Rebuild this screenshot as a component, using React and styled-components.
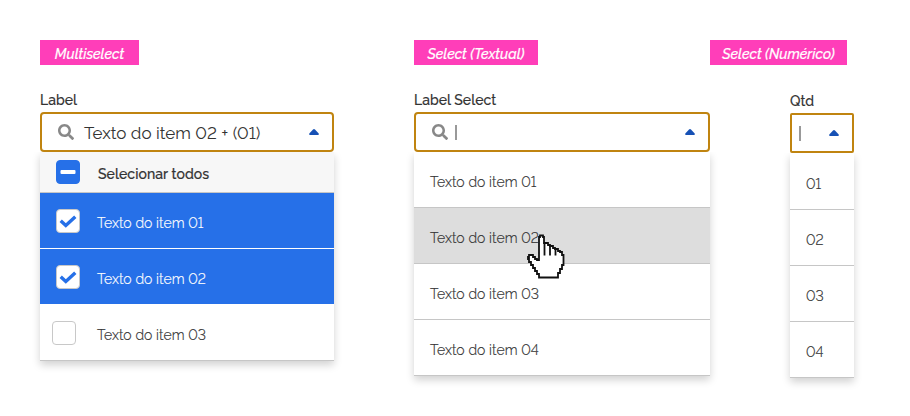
import React from 'react';
import styled, { createGlobalStyle } from 'styled-components';
import { FaSearch } from 'react-icons/fa';

const GlobalStyle = createGlobalStyle`
  * { box-sizing: border-box; }
  body { margin: 0; background: #fff; }
`;

const Page = styled.main`
  display: flex;
  width: 910px;
  height: 416px;
  padding: 40px 0 0 40px;
  font-family: Raleway, Lato, sans-serif;
  font-variant-numeric: lining-nums;
  color: #333;
`;

const Column = styled.section`
  width: ${p => p.$width}px;
  margin-right: ${p => p.$gap || 0}px;
  flex: none;
`;

const Tag = styled.div`
  width: ${p => p.$width}px;
  height: 25px;
  padding-top: 2px;
  line-height: 24px;
  background: #ff3eb9;
  color: #fff;
  text-align: center;
  font-size: 14px;
  font-style: italic;
  font-weight: 500;
  -webkit-text-stroke: 0.2px #fff;
  white-space: nowrap;
`;

const Control = styled.div`
  width: ${p => p.$width}px;
  margin: ${p => p.$top || 0}px 0 0 ${p => p.$left || 0}px;
`;

const Label = styled.div`
  height: 22px;
  margin-top: 25px;
  line-height: 21px;
  font-size: 14px;
  font-weight: 500;
  letter-spacing: 0.04px;
  -webkit-text-stroke: 0.15px #333;
`;

const Field = styled.div`
  display: flex;
  align-items: center;
  height: 40px;
  padding: 0 ${p => p.$right || 13}px 0 ${p => p.$left || 16}px;
  border: 2px solid #c08410;
  border-radius: ${p => p.$radius || 4}px;
  background: #fff;
`;

const SearchIcon = styled(FaSearch)`
  width: 16px;
  height: 16px;
  color: #888;
  flex: none;
`;

const Value = styled.span`
  margin: 2px 0 0 10px;
  font-size: 17px;
  line-height: 24px;
  letter-spacing: 0.03px;
  white-space: nowrap;
`;

const Caret = styled.span`
  width: 2px;
  height: 15px;
  margin-left: ${p => p.$left || 0}px;
  background: #999;
`;

const ArrowSvg = styled.svg`
  width: 10px;
  height: 6px;
  margin-left: auto;
  fill: #1651b5;
`;

const List = styled.div`
  box-shadow: 0 4px 8px rgba(0, 0, 0, 0.18);
  clip-path: inset(0 -16px -16px -16px);
`;

const Row = styled.div`
  display: flex;
  align-items: center;
  height: ${p => p.$height || 56}px;
  padding: ${p => p.$top ?? 5}px 0 0 ${p => p.$left || 16}px;
  border-bottom: ${p => (p.$last ? 0 : 1)}px solid ${p => p.$line || '#c6c6c6'};
  background: ${p => p.$bg || '#fff'};
  color: ${p => p.$color || '#333'};
`;

const ItemText = styled.span`
  font-size: 14px;
  line-height: 20px;
  font-weight: ${p => p.$weight || 300};
  letter-spacing: 0.07px;
  -webkit-text-stroke: 0.2px currentColor;
  margin-left: ${p => p.$left || 0}px;
  white-space: nowrap;
`;

const Box = styled.span`
  display: flex;
  align-items: center;
  justify-content: center;
  width: 24px;
  height: 24px;
  margin-top: ${p => p.$shift ?? -4}px;
  border: 1px solid ${p => (p.$filled ? '#2670e8' : '#c8c8c8')};
  border-radius: 4px;
  background: ${p => (p.$filled ? '#2670e8' : '#fff')};
  flex: none;
`;

const HoverRow = styled(Row)`
  position: relative;
`;

const Pointer = styled.svg`
  position: absolute;
  left: 110px;
  top: 24px;
  width: 44px;
  height: 50px;
  z-index: 1;
`;

const Arrow = () => (
  <ArrowSvg viewBox="0 0 10 6"><path d="M5 0Q5.5 0 6 .5L9.7 4.6Q10.2 6 9 6H1Q-.2 6 .3 4.6L4 .5Q4.5 0 5 0Z" /></ArrowSvg>
);

const Check = () => (
  <svg width="18" height="14" viewBox="0 0 18 14">
    <path d="M1.7 6.8L6.8 11.5L16.3 2.7" fill="none" stroke="#2670e8" strokeWidth="3.4" />
  </svg>
);

const Minus = () => (
  <svg width="16" height="4" viewBox="0 0 16 4"><rect x=".5" width="15" height="4" rx="1" fill="#fff" /></svg>
);

const HandPointer = () => (
  <Pointer viewBox="0 0 44 50">
    <path
      d="M15 28V5H16V3.5H19V5H20V11H24V13H26V14H29V16H31V17H34V19H36V20H38V23H39.5V33H38V37H36V41H34V45.5H15V42H13V39H11V36H9V33H7V30H5V27H4V25H5V23H9V25H11V27H13V28H15Z"
      fill="#fff" stroke="#111" strokeWidth="1.8"
    />
    <path d="M20.5 10V23.5M26 13V23.5M31.5 16V23.5" stroke="#111" strokeWidth="1.8" />
  </Pointer>
);

export default function App() {
  return (
    <>
      <GlobalStyle />
      <Page>
        <Column $width={294} $gap={80}>
          <Tag $width={99}>Multiselect</Tag>
          <Control $width={294}>
            <Label>Label</Label>
            <Field>
              <SearchIcon />
              <Value>Texto do item 02 + (01)</Value>
              <Arrow />
            </Field>
            <List>
              <Row $height={41} $top={3} $bg="#f7f7f7">
                <Box $filled $shift={-3}><Minus /></Box>
                <ItemText $left={18} $weight={500}>Selecionar todos</ItemText>
              </Row>
              <Row $bg="#2670e8" $color="#fff" $line="#fff">
                <Box><Check /></Box>
                <ItemText $left={17}>Texto do item 01</ItemText>
              </Row>
              <Row $height={55} $bg="#2670e8" $color="#fff" $last>
                <Box><Check /></Box>
                <ItemText $left={17}>Texto do item 02</ItemText>
              </Row>
              <Row $height={57} $left={12}>
                <Box />
                <ItemText $left={21}>Texto do item 03</ItemText>
              </Row>
            </List>
          </Control>
        </Column>
        <Column $width={296}>
          <Tag $width={124}>Select (Textual)</Tag>
          <Control $width={296}>
            <Label>Label Select</Label>
            <Field>
              <SearchIcon />
              <Caret $left={7} />
              <Arrow />
            </Field>
            <List>
              <Row><ItemText>Texto do item 01</ItemText></Row>
              <HoverRow $bg="#ddd">
                <ItemText>Texto do item 02</ItemText>
                <HandPointer />
              </HoverRow>
              <Row><ItemText>Texto do item 03</ItemText></Row>
              <Row><ItemText>Texto do item 04</ItemText></Row>
            </List>
          </Control>
        </Column>
        <Column $width={137}>
          <Tag $width={137}>Select (Numérico)</Tag>
          <Control $width={64} $left={80} $top={26}>
            <Label>Qtd</Label>
            <Field $left={7} $radius={2}>
              <Caret />
              <Arrow />
            </Field>
            <List>
              <Row $height={57}><ItemText>01</ItemText></Row>
              <Row><ItemText>02</ItemText></Row>
              <Row><ItemText>03</ItemText></Row>
              <Row><ItemText>04</ItemText></Row>
            </List>
          </Control>
        </Column>
      </Page>
    </>
  );
}
